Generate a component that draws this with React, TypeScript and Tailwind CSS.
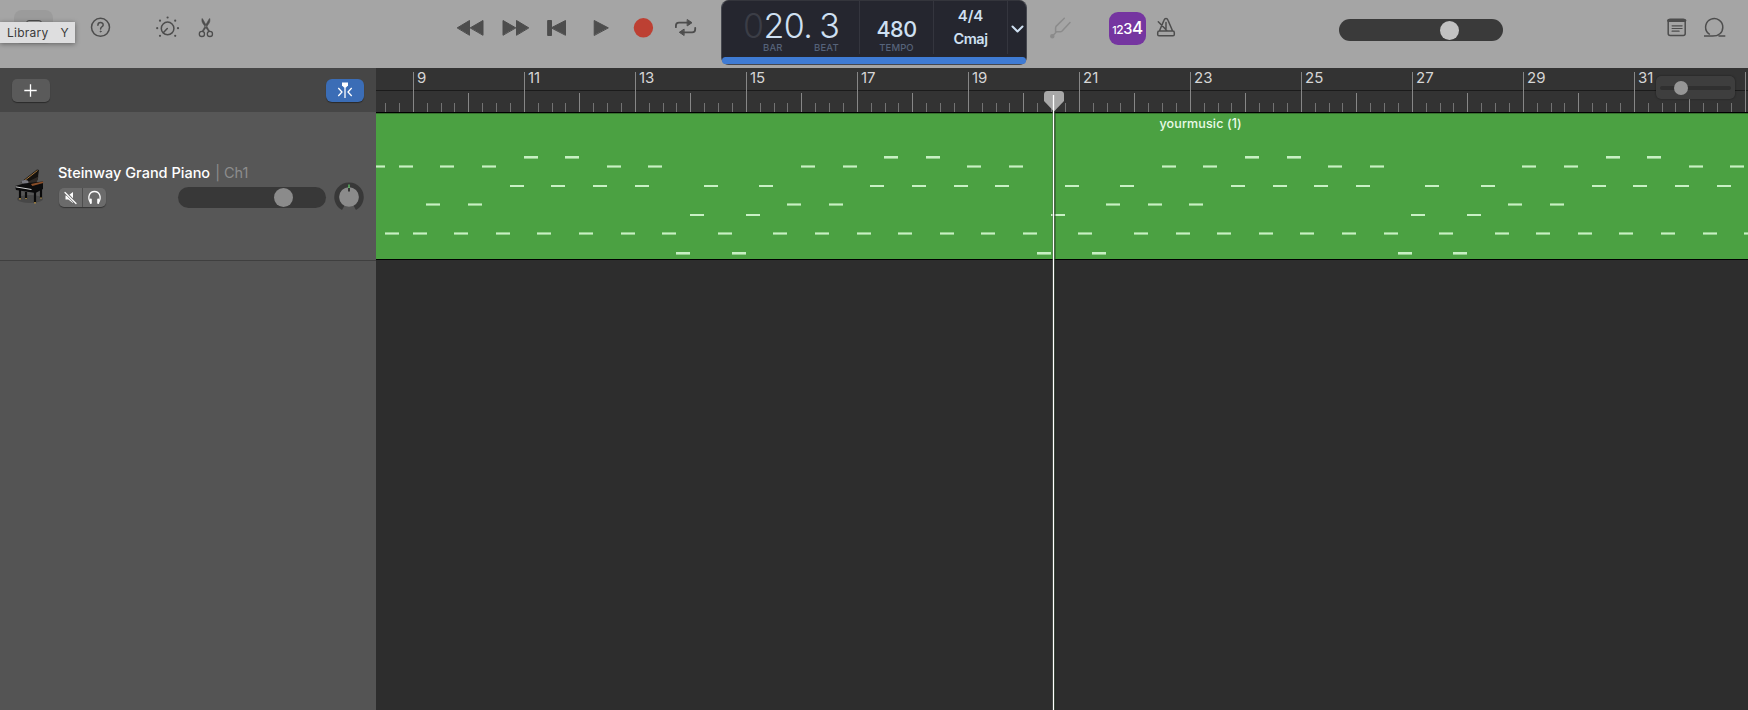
import React from "react";

const BEAT = 13.875;
const ORIGIN = 36.8;

const tickX = (beat: number) => Math.round(ORIGIN + beat * BEAT);
const noteX = (beat: number) => Math.floor(37.1 + beat * 13.872);

const noteRows: { y: number; h: number; soft: boolean; beats: number[] }[] = [
  { y: 43, h: 3, soft: false, beats: [8, 11, 34, 37, 60, 63, 86, 89] },
  { y: 52, h: 3, soft: true, beats: [-3, -1, 2, 5, 14, 17, 28, 31, 40, 43, 54, 57, 66, 69, 80, 83, 92, 95] },
  { y: 72, h: 2, soft: false, beats: [7, 10, 13, 16, 21, 25, 33, 36, 39, 42, 47, 51, 59, 62, 65, 68, 73, 77, 85, 88, 91, 94] },
  { y: 90, h: 3, soft: true, beats: [1, 4, 27, 30, 50, 53, 56, 79, 82] },
  { y: 101, h: 2, soft: false, beats: [20, 24, 46, 72, 76] },
  {
    y: 119,
    h: 3,
    soft: true,
    beats: [-2, 0, 3, 6, 9, 12, 15, 18, 22, 26, 29, 32, 35, 38, 41, 44, 48, 52, 55, 58, 61, 64, 67, 70, 74, 78, 81, 84, 87, 90, 93, 96],
  },
  { y: 139, h: 3, soft: false, beats: [19, 23, 45, 49, 71, 75] },
];

const bars = [9, 11, 13, 15, 17, 19, 21, 23, 25, 27, 29, 31];
const beats = Array.from({ length: 99 }, (_, i) => i - 2);

function Icon({ className = "", children }: { className?: string; children: React.ReactNode }) {
  return (
    <svg viewBox="0 0 32 40" className={`h-10 w-8 shrink-0 text-[#4d4d4d] ${className}`} fill="none" stroke="currentColor" strokeWidth="1.5" strokeLinecap="round" strokeLinejoin="round">
      {children}
    </svg>
  );
}

function Display() {
  return (
    <div className="ml-5 -mt-2 flex h-[65px] w-[306px] shrink-0 flex-col rounded-lg border border-[#45474f] border-t-[#34353c] bg-[#25262f] text-[#cfe0f2]">
      <div className="flex h-[53px]">
        <div className="flex w-[138px] flex-col border-r border-[#34353e]">
          <div className="flex h-[41px] items-end pl-[21px] text-[34px] leading-[33px] font-light tracking-[-0.6px]">
            <span className="text-[#3b3d46]">0</span>
            <span>20.</span>
            <span className="ml-[7px]">3</span>
          </div>
          <div className="flex pl-[41px] text-[9.5px] leading-[12px] font-medium tracking-[0.2px] text-[#56637a]">
            <span className="w-[51px]">BAR</span>
            <span>BEAT</span>
          </div>
        </div>
        <div className="flex w-[74px] flex-col items-center border-r border-[#34353e]">
          <div className="mt-[15px] h-[26px] text-[21.5px] leading-[26px] font-medium tracking-[-0.5px]">480</div>
          <div className="text-[9.5px] leading-[12px] font-medium tracking-[0.1px] text-[#56637a]">TEMPO</div>
        </div>
        <div className="flex w-[74px] flex-col items-center border-r border-[#34353e] text-[15px] leading-[23px] font-semibold">
          <div className="mt-[3px]">4/4</div>
          <div className="text-[14.5px] tracking-[-0.5px]">Cmaj</div>
        </div>
        <svg viewBox="0 0 18 53" className="h-[53px] w-[18px]" fill="none" stroke="currentColor" strokeWidth="2" strokeLinecap="round" strokeLinejoin="round">
          <path d="M4.500 25.500l5 5 5-5" />
        </svg>
      </div>
      <div className="mt-[3px] h-[7px] rounded-full bg-[#3f7bd4]" />
    </div>
  );
}

function Toolbar() {
  return (
    <header className="relative flex h-[68px] shrink-0 items-start bg-[#a5a5a5] pt-2">
      <div className="mt-0.5 ml-3.5 flex h-[34px] w-[39px] shrink-0 justify-center rounded-lg bg-[#9b9b9b] pt-2.5">
        <div className="h-3.5 w-4 rounded-[3px] border-[1.5px] border-[#4d4d4d]" />
      </div>
      <div className="absolute top-[22px] left-0 z-10 flex h-[21px] w-[75px] items-center gap-[12px] bg-[#dededf] pl-[7px] text-[12px] tracking-[0.25px] text-[#3a3a3a] shadow-[0_1px_5px_rgba(0,0,0,0.4)]">
        <span>Library</span>
        <span>Y</span>
      </div>
      <Icon className="ml-[31px]">
        <circle cx="16.5" cy="19.3" r="9" />
        <path d="M13.9 17.2c0-3.5 5.3-3.3 5.3-.3 0 1.8-2.6 2-2.6 4" />
        <circle cx="16.6" cy="23.5" r=".55" fill="currentColor" strokeWidth=".8" />
      </Icon>
      <Icon className="ml-[35px]">
        <circle cx="16.6" cy="20.4" r="6.3" />
        <path d="M16.3 20.6l-3.8 4" />
        <g fill="currentColor" stroke="none">
          <circle cx="16.6" cy="9.5" r="1.1" />
          <circle cx="9" cy="12.7" r="1.1" />
          <circle cx="24.2" cy="12.7" r="1.1" />
          <circle cx="6.2" cy="20.2" r="1.1" />
          <circle cx="27" cy="20.2" r="1.1" />
          <circle cx="9" cy="27.8" r="1.1" />
          <circle cx="24.2" cy="27.8" r="1.1" />
        </g>
      </Icon>
      <Icon className="ml-[7px]">
        <circle cx="11.900" cy="25.900" r="2.600" strokeWidth="1.300" />
        <circle cx="19.900" cy="25.900" r="2.600" strokeWidth="1.300" />
        <path d="M12 10.800c-.3 2 0 3 .8 4.500l5.800 8.200.9-.6L12.600 11zM19.800 10.800c.3 2 0 3-.8 4.500l-5.800 8.200-.9-.6 6.900-11.900z" fill="currentColor" strokeWidth=".6" />
      </Icon>
      <Icon className="ml-[232px]">
        <path d="M3.500 19.700L15.500 12.500v14.400zM16.500 19.700l12.500-7.200v14.400z" fill="currentColor" strokeWidth="1" />
      </Icon>
      <Icon className="ml-[13px]">
        <path d="M29.500 19.700L17.500 12.500v14.400zM16.500 19.700L4 12.500v14.400z" fill="currentColor" strokeWidth="1" />
      </Icon>
      <Icon className="ml-[9px]">
        <path d="M11.500 19.700l14-7.200v14.400zM8 12.500h3.500v15H8z" fill="currentColor" strokeWidth="1" />
      </Icon>
      <Icon className="ml-[13px]">
        <path d="M23 19.700L9.200 12.500v14.600z" fill="currentColor" strokeWidth="1" />
      </Icon>
      <Icon className="ml-2.5">
        <circle cx="16.400" cy="19.800" r="9.700" fill="#bd4033" stroke="none" />
      </Icon>
      <Icon className="ml-2.5">
        <path d="M6.900 19.200v-1.400c0-1.900 1.200-3.100 3.100-3.100h9M26.200 19.800v1.400c0 1.900-1.200 3.100-3.100 3.100h-8.500" strokeWidth="1.800" />
        <path d="M18.500 11.700l4.500 3-4.500 3zM14.800 21.300l-4.500 3 4.500 3z" fill="currentColor" strokeWidth="1" />
      </Icon>
      <Display />
      <Icon className="ml-[17px] text-[#8b8b8b]">
        <circle cx="8.300" cy="28.300" r="1.500" fill="currentColor" />
        <path d="M8.800 27.800l3.700-4M20.300 10.300l-8 7.800c-.7.800-.7 1.200-.7 2v3.700h4.500c.9 0 1.400-.2 2-.8l7.900-8.500" />
      </Icon>
      <div className="mt-[3.500px] ml-[33px] flex h-[33px] w-[37px] shrink-0 items-baseline justify-center rounded-[9px] bg-[#7535a0] font-medium tracking-[-0.4px] text-white">
        <span className="text-[10.500px] leading-[33px]">1</span>
        <span className="text-[12px] leading-[33px]">2</span>
        <span className="text-[14.500px] leading-[33px]">3</span>
        <span className="text-[17px] leading-[33px]">4</span>
      </div>
      <Icon className="ml-1">
        <path d="M9.500 22.800L14 12.200c.5-1.300 1.200-1.700 2-1.700s1.500.4 2 1.700l4.500 10.600M9.200 23h13.600c1 0 1.500.7 1.500 1.700v1.800c0 .8-.5 1.300-1.300 1.300H9c-.8 0-1.300-.5-1.300-1.300v-1.800c0-1 .5-1.700 1.500-1.700zM8.300 13.800l8.500 8.700M16 14.500v6" />
      </Icon>
      <div className="mt-[11px] ml-[157px] flex h-[22px] w-[164px] shrink-0 items-center rounded-full bg-[#3a3a3a] pl-[101px]">
        <div className="size-[19px] rounded-full bg-[#c2c2c2]" />
      </div>
      <Icon className="ml-[158px]">
        <rect x="7.200" y="11.200" width="17" height="16.200" rx="2" />
        <path d="M7.600 12.500h16.200" strokeWidth="3" />
        <path d="M11.100 17.800h10M11.100 20.500h10M11.100 23.200h7" strokeWidth="1.200" />
      </Icon>
      <Icon className="ml-[5px]">
        <path d="M6 28.100h8.500c6 0 10.300-3.300 10.300-8.900a8.600 8.600 0 1 0-15 5.700l2 1.600M20.500 28.100h6.800" strokeLinecap="butt" />
      </Icon>
    </header>
  );
}

function Piano() {
  return (
    <svg viewBox="0 0 32 38" className="h-[38px] w-8 shrink-0">
      <ellipse cx="17" cy="31" rx="13" ry="4" fill="#000" opacity=".18" />
      <path d="M7.500 14.500L24 1.500l2 .5L24.500 12l-8 5z" fill="#15120f" />
      <path d="M11 13L24.500 2.500" stroke="#b98442" strokeWidth=".9" />
      <path d="M8 14l5 .7L25.500 8.500 23.500 15l-12 3z" fill="#302a26" />
      <ellipse cx="12" cy="14" rx="3.500" ry="2" fill="#77777f" />
      <path d="M2 18l9-2.500 19-2v7.500l-7.500 4L3 22z" fill="#0c0c0d" />
      <path d="M18 16l12-2.500.3 1.500-11 3z" fill="#8a4e28" />
      <path d="M2.500 18.800l16 2.700" stroke="#cdcdcd" strokeWidth="1" />
      <path d="M7 22v9M13 24v7M22 23.500V35M28 21v9" stroke="#0a0a0b" strokeWidth="2.200" />
      <path d="M7 30v1.500M13 30v1M22 34v1.500M28 29.500v1" stroke="#c19a4b" strokeWidth="1.500" />
    </svg>
  );
}

function TrackHeader() {
  return (
    <div className="flex h-[149px] items-start border-b border-[#3f3f3f] bg-[#575757]">
      <div className="mt-[56px] ml-[13px]">
        <Piano />
      </div>
      <div className="mt-[51px] ml-[13px] flex w-[268px] flex-col">
        <div className="flex h-[20px] gap-[5px] text-[14.500px] leading-[20px]">
          <span className="font-medium text-white">Steinway Grand Piano</span>
          <span className="text-[#8d8d8d]">| Ch1</span>
        </div>
        <div className="mt-[3px] flex h-[22px] items-center">
          <div className="ml-px flex h-[19px] w-[47px] overflow-hidden rounded-[5px] bg-[#6b6b6b] text-white shadow-[0_1px_1px_rgba(0,0,0,0.4)]">
            <svg viewBox="0 0 23 19" className="h-[19px] w-[23px]" fill="none" stroke="currentColor" strokeLinecap="round">
              <path d="M6.500 7.500h2.800l4.700-3.500v11l-4.700-3.500H6.500z" fill="currentColor" stroke="none" />
              <path d="M6 4l11 11.500" stroke="#6b6b6b" strokeWidth="2.800" />
              <path d="M6 4.500l11 11" strokeWidth="1.200" />
            </svg>
            <div className="w-px bg-[#4e4e4e]" />
            <svg viewBox="0 0 23 19" className="h-[19px] w-[23px]" fill="none" stroke="currentColor" strokeWidth="1.300" strokeLinecap="round">
              <path d="M7.500 14.500c-3.500-5.500-1-11 4-11s7.500 5.500 4 11" />
              <path d="M7.800 11.500v3.500M15.200 11.500v3.500" strokeWidth="2" />
            </svg>
          </div>
          <div className="ml-[72px] flex h-[21px] w-[148px] items-center rounded-full bg-[#383838] pl-[96px]">
            <div className="size-[19px] rounded-full bg-[#8b8b8b]" />
          </div>
        </div>
      </div>
      <svg viewBox="0 0 30 30" className="mt-[70px] ml-[7.500px] size-[30px]">
        <path d="M9.200 25.900A12.200 12.200 0 1 1 20.800 25.900" fill="none" stroke="#383838" strokeWidth="5" />
        <circle cx="15" cy="15" r="9.800" fill="#8b8b8b" />
        <path d="M15 2.500v4" stroke="#62d169" strokeWidth="1.200" />
        <path d="M15 6v3.500" stroke="#111" strokeWidth="1.400" />
      </svg>
    </div>
  );
}

function Sidebar() {
  return (
    <aside className="flex w-[376px] shrink-0 flex-col bg-[#545454]">
      <div className="flex h-[44px] items-center justify-between bg-[#464646] pr-3 pl-3">
        <div className="flex h-[23px] w-[38px] items-center justify-center rounded-[5px] bg-[#5a5a5a] pr-px text-white shadow-[0_1px_1px_rgba(0,0,0,0.4)]">
          <svg viewBox="0 0 13 13" className="size-[13px]" stroke="currentColor" strokeWidth="1.300">
            <path d="M6.500 .3v12.400M.3 6.500h12.400" />
          </svg>
        </div>
        <div className="flex h-[23px] w-[38px] items-center justify-center rounded-[6px] bg-[#3b6db6] text-white shadow-[0_1px_1px_rgba(0,0,0,0.4)]">
          <svg viewBox="0 0 16 16" className="size-4" fill="none" stroke="currentColor" strokeWidth="1.300">
            <path d="M5 .5h6v3L9 5.500H7L5 3.500z" fill="currentColor" stroke="none" />
            <path d="M8 5v11M1.300 6l3.700 4-3.700 4M14.700 6L11 10l3.700 4" />
          </svg>
        </div>
      </div>
      <TrackHeader />
    </aside>
  );
}

function Ruler() {
  return (
    <div className="relative h-[44px] overflow-hidden bg-[#333333]">
      <svg className="absolute inset-0 h-full w-full" shapeRendering="crispEdges">
        <rect x="0" y="22" width="1372" height="1" fill="#1b1b1b" />
        {beats.map((b) => {
          const top = b % 8 === 0 ? 4 : b % 4 === 0 ? 25 : 35;
          return <rect key={b} x={tickX(b)} y={top} width="1" height={44 - top} fill={b % 4 === 0 ? "#878787" : "#737373"} />;
        })}
      </svg>
      <div className="relative flex pl-[41px]">
        {bars.map((b) => (
          <span key={b} className="w-[111px] shrink-0 text-[15px] leading-[20px] text-[#d6d6d6]">
            {b}
          </span>
        ))}
      </div>
      <div className="absolute top-[8px] right-[13px] flex h-[23px] w-[79px] items-center rounded-[5px] bg-[#3e3e3e] px-1 shadow-[0_0_2px_rgba(0,0,0,0.5)]">
        <div className="flex h-[4px] w-full items-center rounded-full bg-[#303030] pl-[14px]">
          <div className="size-[14px] rounded-full bg-[#969696]" />
        </div>
      </div>
    </div>
  );
}

function Region() {
  return (
    <div className="relative h-[148px] border-y border-black bg-[#4ba142]">
      <svg className="absolute inset-0 h-full w-full" shapeRendering="crispEdges">
        <rect width="1372" height="1" fill="#37722f" />
        {noteRows.map((row) =>
          row.beats.map((b) => (
            <g key={`${row.y}-${b}`}>
              <rect x={noteX(b)} y={row.y} width="14" height={row.h} fill={row.h === 3 ? "#94d08c" : "#c8f0c4"} />
              {row.h === 3 && <rect x={noteX(b)} y={row.soft ? row.y + 1 : row.y} width="14" height={row.soft ? 1 : 2} fill="#c8f0c4" />}
            </g>
          ))
        )}
      </svg>
      <div className="relative pt-[2px] pl-[783.500px] text-[12.500px] leading-[18px] font-medium tracking-[0.14px] text-[#eafbe8]">yourmusic (1)</div>
    </div>
  );
}

export default function App() {
  return (
    <div className="flex h-[710px] w-[1748px] flex-col overflow-hidden bg-[#2d2d2d] font-['Inter','Liberation_Sans',sans-serif]">
      <Toolbar />
      <main className="flex min-h-0 flex-1">
        <Sidebar />
        <section className="relative flex min-w-0 flex-1 flex-col bg-[#2d2d2d]">
          <Ruler />
          <Region />
          <svg viewBox="0 0 20 619" className="absolute top-[23px] left-[668px] h-[619px] w-5">
            <path d="M3.500 0h13Q20 0 20 3.500v6.500L10 20.500 0 10V3.500Q0 0 3.500 0z" fill="#a8a8a8" />
            <path d="M10 20v599" stroke="#1a2a18" strokeWidth="3" opacity=".7" />
            <path d="M9.500 4v615" stroke="#fff" strokeWidth="1.300" />
          </svg>
        </section>
      </main>
    </div>
  );
}
